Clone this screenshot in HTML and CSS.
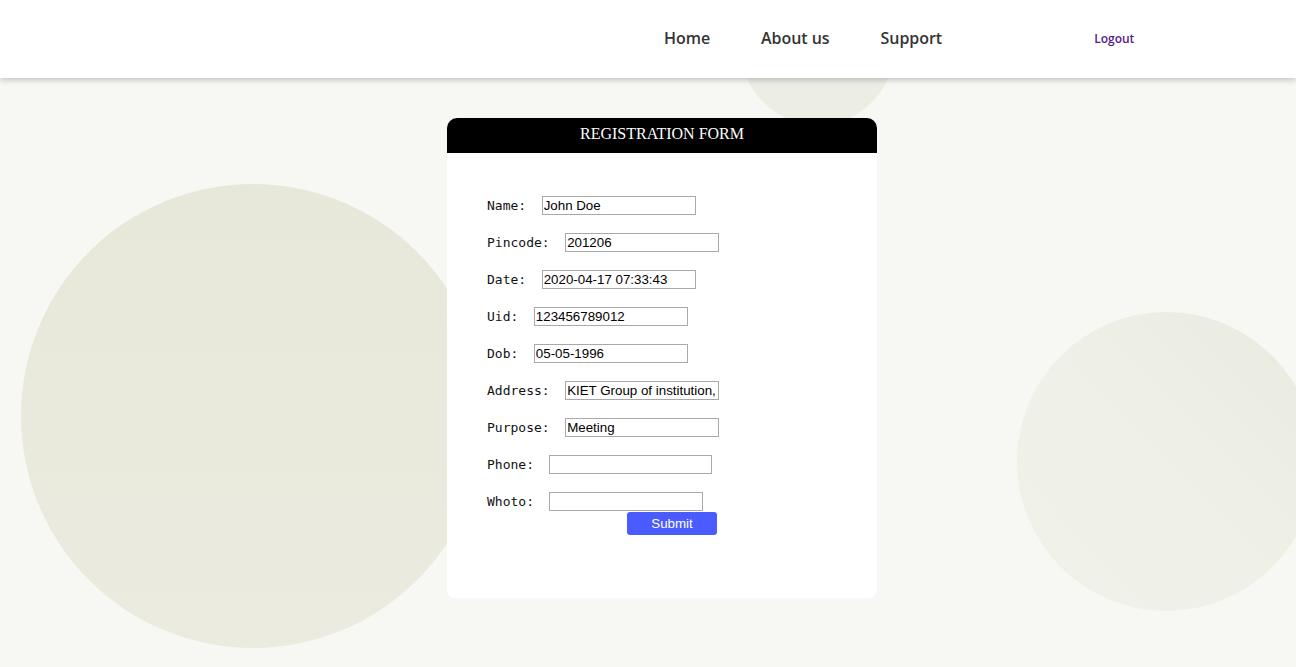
FILE: index.html
```html
<!DOCTYPE html>
<html lang="en">
<head>
<meta charset="utf-8">
<title>Registration Form</title>
<link rel="stylesheet" href="styles.css">
</head>
<body>
<div class="bubble bubble-left"></div>
<div class="bubble bubble-right"></div>
<div class="bubble bubble-top"></div>
<header class="topbar">
  <nav class="nav">
    <a class="nav-link" href="#">Home</a>
    <a class="nav-link" href="#">About us</a>
    <a class="nav-link" href="#">Support</a>
  </nav>
  <a class="logout" href="#">Logout</a>
</header>
<main class="page">
  <section class="card">
    <h1 class="card-title">REGISTRATION FORM</h1>
    <form class="form">
      <div class="row"><label class="lbl">Name:</label><input class="field" type="text" value="John Doe"></div>
      <div class="row"><label class="lbl">Pincode:</label><input class="field" type="text" value="201206"></div>
      <div class="row"><label class="lbl">Date:</label><input class="field" type="text" value="2020-04-17 07:33:43"></div>
      <div class="row"><label class="lbl">Uid:</label><input class="field" type="text" value="123456789012"></div>
      <div class="row"><label class="lbl">Dob:</label><input class="field" type="text" value="05-05-1996"></div>
      <div class="row"><label class="lbl">Address:</label><input class="field" type="text" value="KIET Group of institution, Ghaziabad"></div>
      <div class="row"><label class="lbl">Purpose:</label><input class="field" type="text" value="Meeting"></div>
      <div class="row"><label class="lbl">Phone:</label><input class="field field-wide" type="text" value=""></div>
      <div class="row row-last"><label class="lbl">Whoto:</label><input class="field" type="text" value=""></div>
      <button class="submit" type="button">Submit</button>
    </form>
  </section>
</main>
</body>
</html>
```

FILE: styles.css
```css
html, body {
  margin: 0;
  padding: 0;
}
body {
  background: #f7f8f3;
  min-height: 667px;
  position: relative;
  overflow: hidden;
  font-family: "Open Sans", "Liberation Sans", sans-serif;
}
.bubble {
  position: absolute;
  border-radius: 50%;
  z-index: 0;
}
.bubble-left {
  left: 21px;
  top: 184px;
  width: 464px;
  height: 464px;
  background: linear-gradient(180deg, #e7e8da 0%, #ebecdf 100%);
}
.bubble-right {
  left: 1017px;
  top: 312px;
  width: 299px;
  height: 299px;
  background: linear-gradient(225deg, #eaebdf 0%, #eff0e7 55%, #f0f1e9 100%);
}
.bubble-top {
  left: 741px;
  top: -28px;
  width: 153px;
  height: 153px;
  background: #ecede3;
}
.topbar {
  position: relative;
  z-index: 2;
  height: 78px;
  background: #ffffff;
  box-shadow: 0 2px 6px rgba(0, 0, 0, 0.22);
  display: flex;
  align-items: center;
  padding-left: 664px;
  padding-bottom: 2px;
  box-sizing: border-box;
}
.nav {
  display: flex;
  gap: 51px;
}
.nav-link {
  font-family: "Open Sans", sans-serif;
  font-weight: 600;
  font-size: 16px;
  letter-spacing: -0.05px;
  color: #343434;
  text-decoration: none;
}
.logout {
  margin-left: 152px;
  font-family: "Open Sans", sans-serif;
  font-weight: 600;
  font-size: 12px;
  color: #551a8b;
  text-decoration: none;
}
.page {
  position: relative;
  z-index: 1;
  display: flex;
  padding-top: 40px;
  padding-left: 447px;
}
.card {
  width: 430px;
  background: #ffffff;
  border-radius: 10px 10px 8px 8px;
  overflow: hidden;
}
.card-title {
  margin: 0;
  height: 35px;
  line-height: 32px;
  background: #000000;
  color: #ffffff;
  text-align: center;
  font-family: "Liberation Serif", "Times New Roman", serif;
  font-weight: 400;
  font-size: 16px;
}
.form {
  padding: 43px 40px 63px 40px;
  margin: 0;
}
.row {
  display: flex;
  align-items: center;
  gap: 15.5px;
  height: 19px;
  margin-bottom: 18px;
}
.row-last {
  margin-bottom: 1px;
}
.lbl {
  font-family: "DejaVu Sans Mono", "Liberation Mono", monospace;
  font-size: 13px;
  color: #111111;
}
.field {
  box-sizing: border-box;
  width: 154px;
  height: 19px;
  border: 1px solid #a9a9a9;
  padding: 0 1px;
  margin: 0;
  font-family: "Liberation Sans", Arial, sans-serif;
  font-size: 13.33px;
  color: #000000;
  background: #ffffff;
  outline: none;
}
.field-wide {
  width: 163px;
}
.submit {
  display: block;
  margin-left: 140px;
  width: 90px;
  height: 23px;
  border: none;
  border-radius: 3px;
  background: #4a5bff;
  color: #ffffff;
  font-family: "Liberation Sans", Arial, sans-serif;
  font-size: 13.33px;
  padding: 0;
}
```
